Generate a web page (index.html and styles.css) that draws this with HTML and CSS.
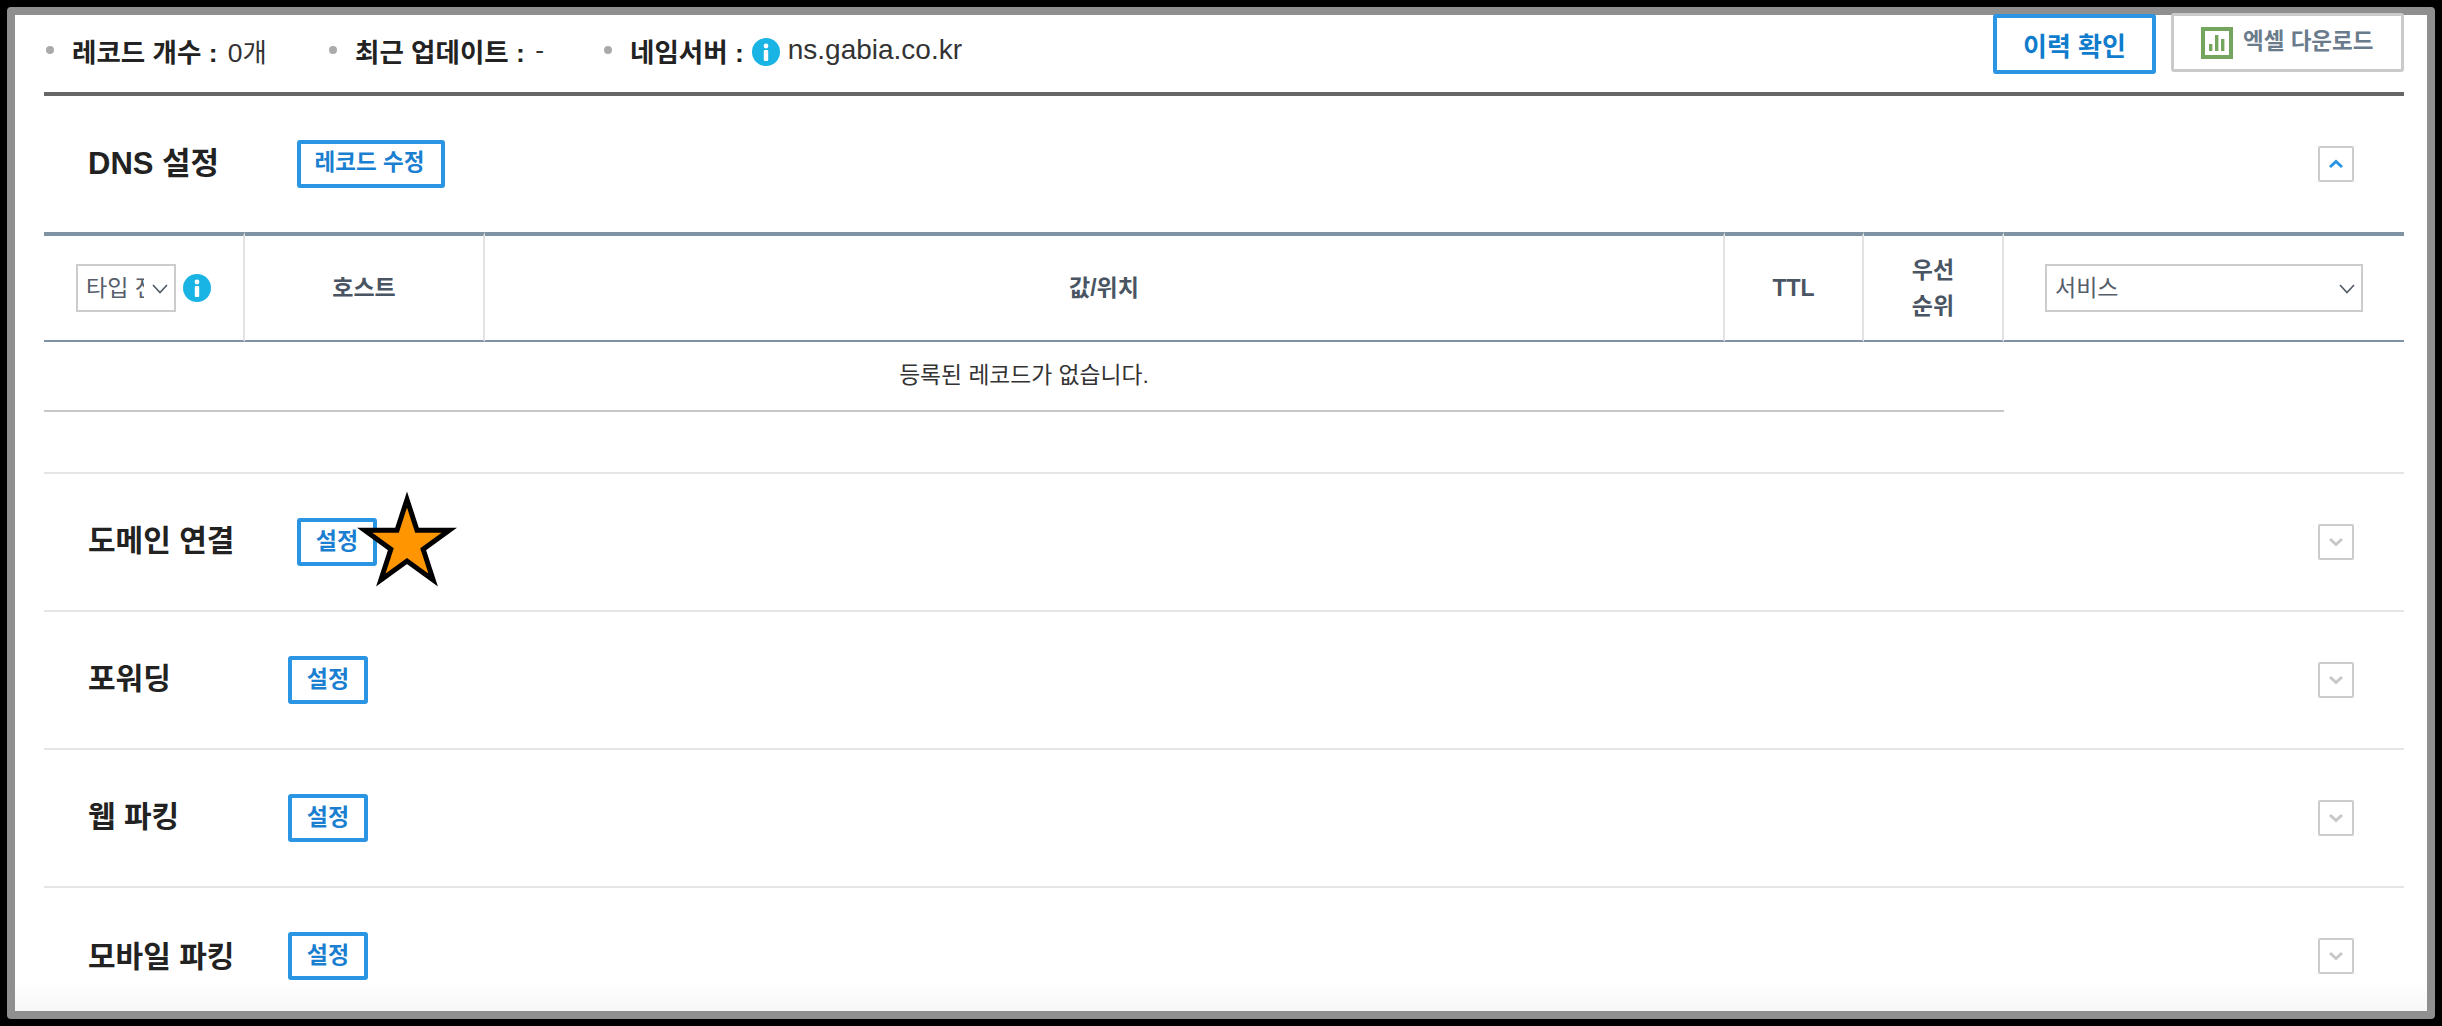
FILE: index.html
```html
<!DOCTYPE html>
<html lang="ko">
<head>
    <meta charset="UTF-8">
    <title>DNS 관리</title>
    <link rel="stylesheet" href="styles.css">
</head>
<body>
    <div class="frame">
        <div class="page">
            <!-- 상단 정보 -->
            <div class="topbar">
                <ul class="summary">
                    <li class="sum-count"><b>레코드 개수 :</b> 0개</li>
                    <li class="sum-date"><b>최근 업데이트 :</b> -</li>
                    <li class="sum-ns">
                        <b>네임서버 :</b>
                        <svg class="info-icon" viewBox="0 0 28 28"><circle cx="14" cy="14" r="14" fill="#1ab4e4"/><circle cx="14" cy="8" r="2.4" fill="#fff"/><rect x="11.8" y="12" width="4.4" height="11" rx="1" fill="#fff"/></svg>
                        <span class="ns-name">ns.gabia.co.kr</span>
                    </li>
                </ul>
                <div class="top-btns">
                    <button class="btn-history">이력 확인</button>
                    <button class="btn-excel">
                        <svg class="excel-icon" viewBox="0 0 32 32"><rect x="2" y="2" width="28" height="28" fill="#fff" stroke="#73a55f" stroke-width="4"/><rect x="8" y="17" width="3.4" height="7" fill="#73a55f"/><rect x="14" y="8" width="3.4" height="16" fill="#73a55f"/><rect x="20" y="12" width="3.4" height="12" fill="#73a55f"/></svg>
                        <span>엑셀 다운로드</span>
                    </button>
                </div>
            </div>

            <!-- DNS 설정 -->
            <section class="dns">
                <div class="sec-head">
                    <h2 class="sec-title long dns-title">DNS 설정</h2>
                    <button class="btn-set btn-edit">레코드 수정</button>
                    <button class="toggle up"><svg viewBox="0 0 16 10"><path d="M2 8 L8 2.5 L14 8" fill="none" stroke="#2a95e3" stroke-width="3"/></svg></button>
                </div>
                <table class="records">
                    <colgroup>
                        <col class="c-type"><col class="c-host"><col class="c-value"><col class="c-ttl"><col class="c-prio"><col class="c-svc">
                    </colgroup>
                    <thead>
                        <tr>
                            <th>
                                <div class="type-cell">
                                    <div class="select select-type">
                                        <span>타입 전체</span>
                                        <svg class="caret" viewBox="0 0 16 10"><path d="M1 1 L8 8.5 L15 1" fill="none" stroke="#4f5a66" stroke-width="1.6"/></svg>
                                    </div>
                                    <svg class="info-icon" viewBox="0 0 28 28"><circle cx="14" cy="14" r="14" fill="#1ab4e4"/><circle cx="14" cy="8" r="2.4" fill="#fff"/><rect x="11.8" y="12" width="4.4" height="11" rx="1" fill="#fff"/></svg>
                                </div>
                            </th>
                            <th>호스트</th>
                            <th>값/위치</th>
                            <th>TTL</th>
                            <th>우선<br>순위</th>
                            <th>
                                <div class="select select-svc">
                                    <span>서비스</span>
                                    <svg class="caret" viewBox="0 0 16 10"><path d="M1 1 L8 8.5 L15 1" fill="none" stroke="#4f5a66" stroke-width="1.6"/></svg>
                                </div>
                            </th>
                        </tr>
                    </thead>
                    <tbody>
                        <tr>
                            <td class="empty" colspan="5">등록된 레코드가 없습니다.</td>
                            <td></td>
                        </tr>
                    </tbody>
                </table>
            </section>

            <section class="sec">
                <h2 class="sec-title long">도메인 연결</h2>
                <button class="btn-set">설정
                    <svg class="star" viewBox="-55 -56 110 110"><polygon points="0,-44.5 10,-13.75 42.3,-13.75 16.17,5.25 26.16,36 0,17 -26.16,36 -16.17,5.25 -42.3,-13.75 -10,-13.75" fill="#ff9500" stroke="#000" stroke-width="5" stroke-miterlimit="10"/></svg>
                </button>
                <button class="toggle"><svg viewBox="0 0 16 10"><path d="M2 2 L8 7.5 L14 2" fill="none" stroke="#c8c8c8" stroke-width="3"/></svg></button>
            </section>
            <section class="sec">
                <h2 class="sec-title">포워딩</h2>
                <button class="btn-set">설정</button>
                <button class="toggle"><svg viewBox="0 0 16 10"><path d="M2 2 L8 7.5 L14 2" fill="none" stroke="#c8c8c8" stroke-width="3"/></svg></button>
            </section>
            <section class="sec">
                <h2 class="sec-title">웹 파킹</h2>
                <button class="btn-set">설정</button>
                <button class="toggle"><svg viewBox="0 0 16 10"><path d="M2 2 L8 7.5 L14 2" fill="none" stroke="#c8c8c8" stroke-width="3"/></svg></button>
            </section>
            <section class="sec">
                <h2 class="sec-title">모바일 파킹</h2>
                <button class="btn-set">설정</button>
                <button class="toggle"><svg viewBox="0 0 16 10"><path d="M2 2 L8 7.5 L14 2" fill="none" stroke="#c8c8c8" stroke-width="3"/></svg></button>
            </section>
        </div>
    </div>
</body>
</html>
```

FILE: styles.css
```css
* {
    box-sizing: border-box;
}

html, body {
    margin: 0;
    height: 1026px;
    overflow: hidden;
}

body {
    padding: 7px;
    background: #000;
    font-family: "Liberation Sans", "Noto Sans CJK KR", sans-serif;
    color: #333;
}

button {
    font-family: inherit;
    background: #fff;
    cursor: pointer;
}

.frame {
    width: 2428px;
    height: 1012px;
    border: 8px solid #8f8f8f;
    border-radius: 4px;
}

.page {
    height: 996px;
    padding: 0 23px 0 29px;
    background: linear-gradient(to bottom, #fff 965px, #f7f7f7 100%);
}

/* top */
.topbar {
    display: flex;
    justify-content: space-between;
    height: 81px;
    border-bottom: 4px solid #666;
}

.summary {
    display: flex;
    margin: 0;
    padding: 0;
    list-style: none;
    font-size: 26.5px;
    height: 70px;
    align-items: center;
}

.summary li {
    display: flex;
    align-items: center;
    gap: 3px;
    white-space: pre;
}

.summary li::before {
    content: "";
    width: 8px;
    height: 8px;
    margin: 0 15px 0 2px;
    border-radius: 50%;
    background: #aaa;
}

.summary b {
    color: #222;
}

.sum-count {
    width: 283px;
}

.sum-date {
    width: 275px;
}

.sum-ns svg {
    margin: 3px 5px 0;
}

.ns-name {
    font-size: 28px;
}

.info-icon {
    width: 28px;
    height: 28px;
    flex: none;
}

.top-btns {
    display: flex;
    gap: 15px;
    margin-top: -2px;
    height: 60px;
}

.btn-history {
    width: 163px;
    height: 60px;
    margin-top: 1px;
    border: 4px solid #2a95e3;
    border-radius: 3px;
    font-size: 26px;
    font-weight: bold;
    color: #0f7ccc;
}

.btn-excel {
    display: flex;
    align-items: center;
    gap: 10px;
    width: 233px;
    height: 59px;
    padding: 0 0 0 27px;
    border: 3px solid #c8cacc;
    border-radius: 3px;
    font-size: 22.5px;
    font-weight: bold;
    color: #6a7b8c;
}

.btn-excel span {
    margin-bottom: 8px;
}

.excel-icon {
    width: 32px;
    height: 32px;
}

/* sections */
.sec-head, .sec {
    display: flex;
    align-items: center;
    position: relative;
}

.sec-head {
    height: 136px;
}

.sec {
    height: 138px;
    border-top: 2px solid #e5e5e5;
}

.sec:last-child {
    height: 94px;
    padding-top: 44px;
    align-items: flex-start;
}

.sec-title {
    width: 244px;
    margin: 0;
    padding-left: 44px;
    padding-bottom: 8px;
    font-size: 30px;
    font-weight: bold;
    color: #222;
}

.sec-title.long {
    width: 253px;
}

.dns-title {
    font-size: 31px;
}

.btn-set {
    position: relative;
    height: 48px;
    min-width: 80px;
    padding: 0 14px 8px;
    border: 4px solid #2a95e3;
    border-radius: 3px;
    font-size: 23px;
    font-weight: bold;
    color: #1a7fd0;
}

.btn-edit {
    width: 148px;
    padding: 0 3px 8px 0;
    font-size: 22.5px;
}

.star {
    position: absolute;
    left: 51px;
    top: -34px;
    width: 110px;
    height: 110px;
}

.toggle {
    position: absolute;
    right: 50px;
    top: 50%;
    width: 36px;
    height: 36px;
    margin-top: -18px;
    padding: 0;
    display: flex;
    align-items: center;
    justify-content: center;
    border: 2px solid #ccc;
    border-radius: 2px;
}

.sec:last-child .toggle {
    top: 68px;
}

.toggle svg {
    width: 16px;
    height: 10px;
}

/* table */
.dns {
    padding-bottom: 60px;
}

.records {
    width: 2360px;
    table-layout: fixed;
    border-collapse: separate;
    border-spacing: 0;
}

.c-type { width: 201px; }
.c-host { width: 240px; }
.c-value { width: 1240px; }
.c-ttl { width: 139px; }
.c-prio { width: 140px; }
.c-svc { width: 400px; }

.records th {
    height: 110px;
    padding: 0;
    border-top: 4px solid #7f93a4;
    border-bottom: 2px solid #7f93a4;
    border-right: 2px solid #e2e2e2;
    font-size: 23px;
    line-height: 36px;
    color: #4a5563;
}

.records th:last-child {
    border-right: none;
}

.type-cell {
    display: flex;
    align-items: center;
    gap: 7px;
    padding-left: 32px;
}

.select {
    display: flex;
    align-items: center;
    height: 48px;
    border: 2px solid #ccc;
    font-size: 23px;
    font-weight: normal;
    color: #555e6a;
    background: #fff;
    position: relative;
}

.select span {
    overflow: hidden;
    white-space: nowrap;
    text-align: left;
}

.select-type {
    width: 100px;
    padding-left: 8px;
}

.select-type span {
    width: 58px;
}

.select-svc {
    width: 318px;
    margin: 0 auto;
    padding-left: 8px;
}

.caret {
    position: absolute;
    right: 6px;
    top: 18px;
    width: 16px;
    height: 10px;
}

.empty {
    height: 70px;
    padding-bottom: 6px;
    border-bottom: 2px solid #c8c8c8;
    text-align: center;
    font-size: 22.8px;
}
```
